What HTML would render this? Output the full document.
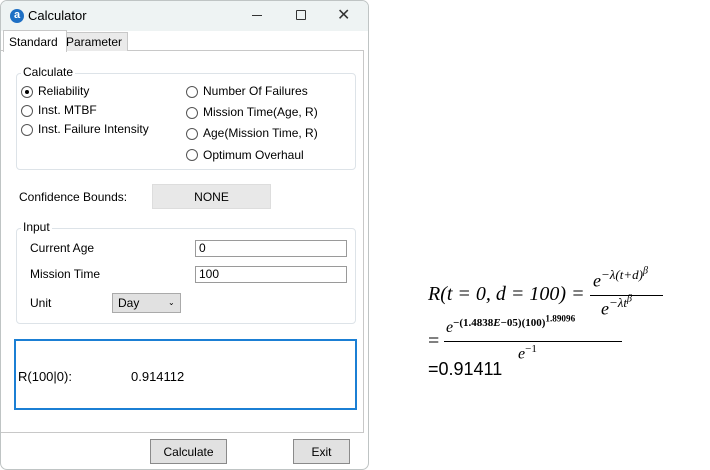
<html><head><style>
body{margin:0;width:710px;height:470px;background:#fff;position:relative;font-family:"Liberation Sans",sans-serif;font-size:12px;color:#000;overflow:hidden}
.a{position:absolute}
.win{left:0;top:0;width:367px;height:468px;border:1px solid #bfc4c4;border-radius:7px;background:#fff;overflow:hidden}
.tb{left:0;top:0;width:367px;height:30px;background:#eef3f3}
.rad{position:absolute;width:10px;height:10px;border:1px solid #555;border-radius:50%;background:#fff}
.grp{position:absolute;border:1px solid #dde3e8;border-radius:4px}
.lg{position:absolute;background:#fff;padding:0 2px}
.tx{position:absolute;border:1px solid #9a9a9a;background:#fff;height:15px;line-height:15px;padding-left:3px;box-sizing:content-box}
.btn{position:absolute;border:1px solid #8a8a8a;background:#e1e1e1;text-align:center;box-sizing:border-box}
.m{font-family:"Liberation Serif","DejaVu Serif",serif;font-style:italic}
</style></head><body>
<div class="a win">
<div class="a tb"></div>
<div class="a" style="left:9px;top:8px;width:14px;height:14px;border-radius:50%;background:#1e6fc4;color:#fff;font-size:11px;font-weight:bold;line-height:13px;text-align:center">a</div>
<div class="a" style="left:27px;top:7px;font-size:13px">Calculator</div>
<div class="a" style="left:251px;top:14px;width:10px;height:1px;background:#333"></div>
<div class="a" style="left:295px;top:9px;width:8px;height:8px;border:1px solid #333;border-radius:1px"></div>
<div class="a" style="left:336px;top:4px;font-size:16px;color:#333">✕</div>
<div class="a" style="left:0;top:49px;width:362px;height:381px;border:1px solid #c8c8c8;border-left:none"></div>
<div class="a" style="left:60px;top:31px;width:61px;height:18px;background:#eaeaea;border:1px solid #c8c8c8;border-bottom:none;line-height:18px;padding-left:4px">Parameter</div>
<div class="a" style="left:2px;top:29px;width:57px;height:21px;background:#fff;border:1px solid #c8c8c8;border-bottom:none;line-height:22px;padding-left:5px">Standard</div>
<div class="grp" style="left:15px;top:72px;width:338px;height:95px"></div>
<div class="lg" style="left:20px;top:64px">Calculate</div>
<div class="rad" style="left:20px;top:85px"></div><div class="a" style="left:24px;top:89px;width:4px;height:4px;border-radius:50%;background:#000"></div>
<div class="a" style="left:37px;top:83px">Reliability</div>
<div class="rad" style="left:20px;top:104px"></div><div class="a" style="left:37px;top:102px">Inst. MTBF</div>
<div class="rad" style="left:20px;top:123px"></div><div class="a" style="left:37px;top:121px">Inst. Failure Intensity</div>
<div class="rad" style="left:185px;top:85px"></div><div class="a" style="left:202px;top:83px">Number Of Failures</div>
<div class="rad" style="left:185px;top:106px"></div><div class="a" style="left:202px;top:104px">Mission Time(Age, R)</div>
<div class="rad" style="left:185px;top:127px"></div><div class="a" style="left:202px;top:125px">Age(Mission Time, R)</div>
<div class="rad" style="left:185px;top:148px"></div><div class="a" style="left:202px;top:147px">Optimum Overhaul</div>
<div class="a" style="left:18px;top:189px">Confidence Bounds:</div>
<div class="btn" style="left:151px;top:183px;width:119px;height:25px;line-height:24px;border-color:#ddd;background:#e8e8e8">NONE</div>
<div class="grp" style="left:15px;top:227px;width:338px;height:94px"></div>
<div class="lg" style="left:20px;top:219px">Input</div>
<div class="a" style="left:29px;top:240px">Current Age</div>
<div class="tx" style="left:194px;top:239px;width:147px">0</div>
<div class="a" style="left:29px;top:266px">Mission Time</div>
<div class="tx" style="left:194px;top:265px;width:147px">100</div>
<div class="a" style="left:29px;top:295px">Unit</div>
<div class="btn" style="left:111px;top:292px;width:69px;height:20px;line-height:19px;text-align:left;padding-left:5px;border-color:#aaa">Day<span style="position:absolute;left:55px;top:-1px;font-size:8px">⌄</span></div>
<div class="a" style="left:13px;top:338px;width:339px;height:67px;border:2px solid #1b7fd4"></div>
<div class="a" style="left:17px;top:368px;font-size:13px">R(100|0):</div>
<div class="a" style="left:130px;top:368px;font-size:13px">0.914112</div>
<div class="btn" style="left:149px;top:438px;width:77px;height:25px;line-height:24px">Calculate</div>
<div class="btn" style="left:292px;top:438px;width:57px;height:25px;line-height:24px">Exit</div>
</div>
<div class="a m" style="left:428px;top:283px;font-size:20px;white-space:nowrap">R(t = 0, d = 100) =</div>
<div class="a m" style="left:593px;top:266px;font-size:18px;white-space:nowrap">e<sup style="font-size:13px">−λ(t+d)<sup style="font-size:10px">β</sup></sup></div>
<div class="a" style="left:590px;top:295px;width:73px;height:1px;background:#000"></div>
<div class="a m" style="left:601px;top:294px;font-size:18px;white-space:nowrap">e<sup style="font-size:13px">−λt<sup style="font-size:10px">β</sup></sup></div>
<div class="a" style="left:428px;top:330px;font-size:20px;font-family:'Liberation Serif',serif">=</div>
<div class="a m" style="left:446px;top:313px;font-size:16px;white-space:nowrap">e<sup style="font-size:11px;font-style:normal;font-weight:bold">−(1.4838<i>E</i>−05)(100)<sup>1.89096</sup></sup></div>
<div class="a" style="left:444px;top:341px;width:178px;height:1px;background:#000"></div>
<div class="a m" style="left:518px;top:343px;font-size:16px;white-space:nowrap">e<sup style="font-size:11px;font-style:normal">−1</sup></div>
<div class="a" style="left:428px;top:359px;font-size:18px">=0.91411</div>
</body></html>
